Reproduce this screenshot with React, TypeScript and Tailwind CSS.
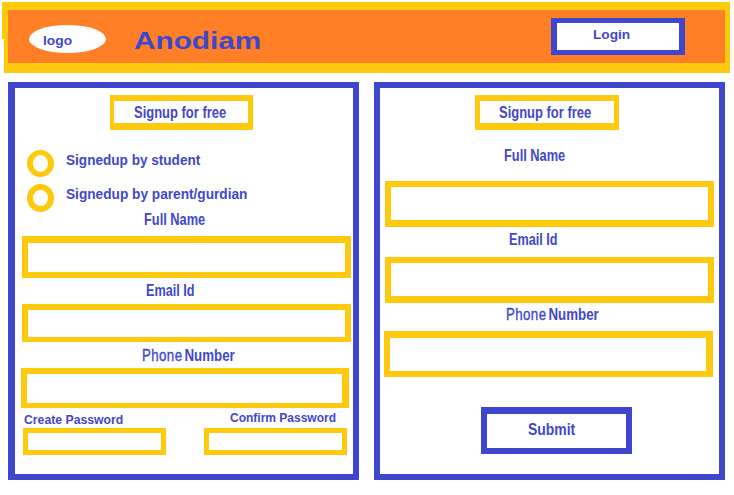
import type { ReactNode } from "react";
import { clsx } from "clsx";

type TextProps = { className?: string; children: ReactNode };

// A single line of bold lettering; the scale utilities condense or widen it.
function Text({ className, children }: TextProps) {
  return (
    <span className={clsx("block w-max origin-left whitespace-pre font-bold leading-4", className)}>
      {children}
    </span>
  );
}

function Field({ className, label }: { className: string; label: string }) {
  return <input aria-label={label} className={clsx("block border-[#ffc90e] bg-white outline-none", className)} />;
}

function PhoneLabel({ className }: { className: string }) {
  return (
    <Text className={clsx("scale-x-[0.83] text-base", className)}>
      <span className="font-normal tracking-[0.5px] [-webkit-text-stroke:0.35px_#3f48cc]">Phone</span>
      <span className="[word-spacing:-2px]"> Number</span>
    </Text>
  );
}

function SignupTitle({ className }: { className: string }) {
  return (
    <div className={clsx("mt-[7px] h-[35px] border-t-[6px] border-r-[5px] border-b-[7px] border-[#ffc90e]", className)}>
      <Text className="mt-1 scale-x-[0.81] text-base">Signup for free</Text>
    </div>
  );
}

function RadioRow({ className, ring, children }: { className: string; ring: string; children: ReactNode }) {
  return (
    <div className={clsx("ml-[11.5px] flex h-[27px] items-start", className)}>
      <span className={clsx("w-[27.5px] shrink-0 rounded-[50%] border-x-[6.5px] border-[#ffc90e]", ring)} />
      <Text className="mt-0.5 ml-3 text-sm">{children}</Text>
    </div>
  );
}

export default function App() {
  return (
    <div className="h-[495px] w-[734px] overflow-hidden bg-white pt-0.5 font-['Liberation_Sans',Arial,sans-serif] text-[#3f48cc]">
      <header className="relative ml-1 flex h-[71px] w-[726px] items-start border-t-[8px] border-r-[5px] border-b-[10px] border-l-4 border-[#ffc90e] bg-[#ff7f27]">
        <span className="absolute -top-2 -left-1.5 h-[37px] w-0.5 bg-[#ffc90e]" />
        <div className="mt-[15px] ml-[21px] h-7 w-[77px] rounded-[50%] bg-white">
          <Text className="mt-2 ml-3.5 scale-x-[1.06] text-[13px]">logo</Text>
        </div>
        <h1 className="mt-[19px] ml-7 w-[130px]">
          <Text className="scale-x-[1.24] text-2xl leading-6">Anodiam</Text>
        </h1>
        <button className="mt-2 ml-[287px] h-[37px] w-[134px] border-x-[6px] border-y-[5px] border-[#3f48cc] bg-white">
          <Text className="-mt-1 ml-9 scale-x-[1.05] text-[13px]">Login</Text>
        </button>
      </header>

      <main className="mt-[9px] ml-2 flex gap-[15px]">
        <section className="h-[398px] w-[351px] border-[6px] border-l-[7px] border-[#3f48cc]">
          <SignupTitle className="ml-[95px] w-[143px] border-l-4 pl-5" />
          <RadioRow className="mt-5 [&>span:last-child]:scale-x-[0.97]" ring="h-[27px] border-y-[5px]">Signedup by student</RadioRow>
          <RadioRow className="mt-[7px] [&>span:last-child]:scale-x-[0.976]" ring="h-7 border-y-[6px]">Signedup by parent/gurdian</RadioRow>

          <Text className="mt-px ml-[129px] scale-x-[0.8] text-base">Full Name</Text>
          <Field label="Full Name" className="mt-2 ml-[7px] h-[42px] w-[329px] border-[6px] border-t-[7px]" />
          <Text className="mt-[5px] ml-[131px] scale-x-[0.79] text-base">Email Id</Text>
          <Field label="Email Id" className="mt-[5px] ml-[7px] h-[38px] w-[329px] border-[6px] border-b-[5px]" />
          <PhoneLabel className="mt-1.5 ml-[127px]" />
          <Field label="Phone Number" className="mt-1 ml-1.5 h-10 w-[328px] border-[6px] border-r-[7px] border-b-[5px]" />

          <div className="ml-2 flex gap-[38px]">
            <div className="w-[143px]">
              <Text className="mt-1 ml-px scale-x-[1.02] text-xs leading-4">Create Password</Text>
              <Field label="Create Password" className="h-[27px] w-full border-[5px]" />
            </div>
            <div className="w-[143px]">
              <Text className="mt-0.5 mb-0.5 ml-[26px] text-xs leading-4">Confirm Password</Text>
              <Field label="Confirm Password" className="h-[27px] w-full border-[5px]" />
            </div>
          </div>
        </section>

        <section className="h-[398px] w-[351px] border-[6px] border-[#3f48cc]">
          <SignupTitle className="ml-[95px] w-[144px] border-l-[5px] pl-[19px]" />
          <Text className="mt-[18px] ml-[124px] scale-x-[0.8] text-base">Full Name</Text>
          <Field label="Full Name" className="mt-[17px] ml-[5px] h-[46px] w-[329px] border-[6px] border-b-[7px]" />
          <Text className="mt-[5px] ml-[129px] scale-x-[0.79] text-base">Email Id</Text>
          <Field label="Email Id" className="mt-[9px] ml-[5px] h-[46px] w-[329px] border-[6px] border-b-[7px]" />
          <PhoneLabel className="mt-1 ml-[126px]" />
          <Field label="Phone Number" className="mt-2 ml-1 h-[46px] w-[329px] border-[6px] border-t-[7px] border-r-[7px]" />
          <button className="mt-[30px] ml-[101px] block h-[47px] w-[151px] border-[6px] border-t-[7px] border-[#3f48cc] bg-white">
            <Text className="-mt-0.5 ml-[41px] scale-x-[0.87] text-base">Submit</Text>
          </button>
        </section>
      </main>
    </div>
  );
}
